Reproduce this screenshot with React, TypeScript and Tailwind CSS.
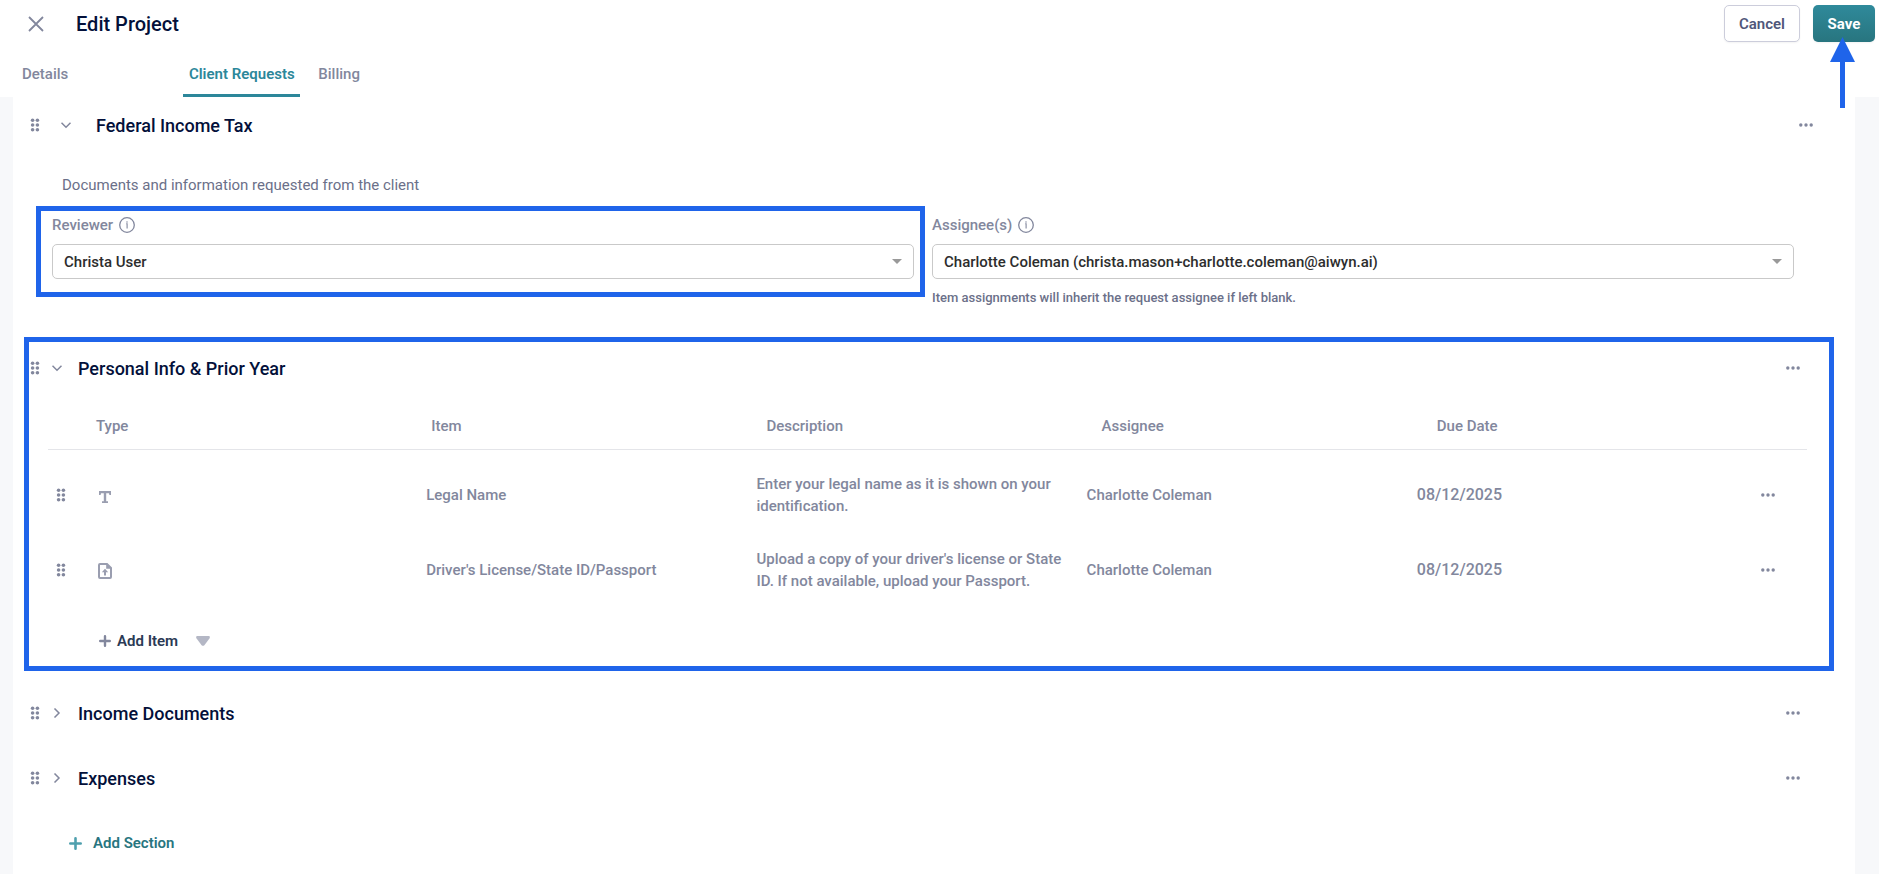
import { useState } from 'react';
import type { ReactNode } from 'react';

type RequestItem = {
  id: string;
  type: 'text' | 'file';
  name: string;
  description: string;
  assignee: string;
  dueDate: string;
};

const items: RequestItem[] = [
  {
    id: 'legal-name',
    type: 'text',
    name: 'Legal Name',
    description: 'Enter your legal name as it is shown on your identification.',
    assignee: 'Charlotte Coleman',
    dueDate: '08/12/2025',
  },
  {
    id: 'license',
    type: 'file',
    name: "Driver's License/State ID/Passport",
    description: "Upload a copy of your driver's license or State ID. If not available, upload your Passport.",
    assignee: 'Charlotte Coleman',
    dueDate: '08/12/2025',
  },
];

const columns = ['Type', 'Item', 'Description', 'Assignee', 'Due Date'];

function DragHandle() {
  return (
    <button type="button" aria-label="Reorder" className="block cursor-grab text-[#82879d]">
      <svg className="block h-[14px] w-[10px]" viewBox="0 0 10 14" fill="currentColor">
        {[2.3, 7, 11.7].map((cy) => (
          <g key={cy}>
            <circle cx="2.6" cy={cy} r="1.8" />
            <circle cx="7.4" cy={cy} r="1.8" />
          </g>
        ))}
      </svg>
    </button>
  );
}

function MoreButton() {
  return (
    <button type="button" aria-label="More options" className="block text-[#82879d]">
      <svg className="block h-1 w-[14px]" viewBox="0 0 14 4" fill="currentColor">
        <circle cx="1.8" cy="2" r="1.7" />
        <circle cx="7" cy="2" r="1.7" />
        <circle cx="12.2" cy="2" r="1.7" />
      </svg>
    </button>
  );
}

function Chevron({ open }: { open: boolean }) {
  return (
    <svg className="block h-[10px] w-[10px]" viewBox="0 0 10 10" fill="none" stroke="currentColor" strokeWidth="1.5">
      <path d={open ? 'M0.5 2.8 5 7.3 9.5 2.8' : 'M2.5 0.5 7 5 2.5 9.5'} />
    </svg>
  );
}

function InfoIcon() {
  return (
    <svg className="h-4 w-4 text-[#82879d]" viewBox="0 0 16 16" fill="none" stroke="currentColor" strokeWidth="1.3">
      <circle cx="8" cy="8" r="7.3" />
      <path d="M7.2 6.8H8.1V11.4" strokeWidth="1.1" />
      <circle cx="8" cy="4.9" r="0.75" fill="currentColor" stroke="none" />
    </svg>
  );
}

function TypeIcon({ type }: { type: RequestItem['type'] }) {
  if (type === 'text') {
    return (
      <svg className="ml-[3px] mt-1 h-3 w-3 text-[#9a9eb0]" viewBox="0 0 12 12" fill="currentColor" role="img" aria-label="Text">
        <path d="M0 0H12V4H10.4L10 2.2H7.2V10.2H9V12H3V10.2H4.8V2.2H2L1.6 4H0Z" />
      </svg>
    );
  }
  return (
    <svg className="ml-[2px] mt-[2px] h-4 w-[14px] text-[#9a9eb0]" viewBox="0 0 14 16" role="img" aria-label="File upload">
      <path d="M2 1H9L13 5V14Q13 15 12 15H2Q1 15 1 14V2Q1 1 2 1Z" fill="none" stroke="currentColor" strokeWidth="2" />
      <path d="M8.2 0.5V5.8H13.5Z" fill="currentColor" />
      <path d="M7 5.8 10.2 9.2H8V12.4H6V9.2H3.8Z" fill="currentColor" />
    </svg>
  );
}

function PlusIcon({ className }: { className: string }) {
  return (
    <svg className={className} viewBox="0 0 12 12" stroke="currentColor" strokeWidth="2.4" strokeLinecap="round">
      <path d="M6 1.2V10.8M1.2 6H10.8" />
    </svg>
  );
}

function Section({ title, open, onToggle, children }: { title: string; open: boolean; onToggle: () => void; children?: ReactNode }) {
  return (
    <section>
      <div className="flex h-[65px] items-center pb-1 pl-[6px] pr-[34px]">
        <DragHandle />
        <button type="button" aria-label={`Toggle ${title}`} onClick={onToggle} className="ml-3 text-[#82879d]">
          <Chevron open={open} />
        </button>
        <h3 className="ml-4 flex-1 pt-[2px] text-[18px] font-medium leading-6 text-[#03103a]">{title}</h3>
        <MoreButton />
      </div>
      {open && children}
    </section>
  );
}

function SelectField({ id, label, value, helper }: { id: string; label: string; value: string; helper?: string }) {
  return (
    <div>
      <div className="flex h-5 items-center gap-[6px] text-[#82879d]">
        <label htmlFor={id} className="text-[15px] font-medium leading-5">{label}</label>
        <InfoIcon />
      </div>
      <div className="relative mt-[9px]">
        <select
          id={id}
          defaultValue={value}
          className="h-[35px] w-full appearance-none rounded-[5px] border border-[#c9c9c9] bg-white pl-[11px] pr-8 pt-[2px] text-[15px] font-medium text-[#2d2d2d]"
        >
          <option>{value}</option>
        </select>
        <svg className="pointer-events-none absolute right-3 top-[15px] h-[5px] w-[10px] text-[#999999]" viewBox="0 0 10 5" fill="currentColor">
          <path d="M0 0H10L5 5Z" />
        </svg>
      </div>
      {helper && <p className="mt-[9px] text-[13px] font-medium leading-5 text-[#6b7089]">{helper}</p>}
    </div>
  );
}

function ItemsTable() {
  return (
    <table className="ml-6 mr-[27px] block text-left text-[15px] text-[#82879d]">
      <thead className="block">
        <tr className="grid h-[48px] grid-cols-[48px_repeat(5,minmax(0,1fr))_35px] items-center border-b border-[#e4e5e9]">
          <td />
          {columns.map((column) => (
            <th key={column} scope="col" className="font-medium leading-5">{column}</th>
          ))}
          <td />
        </tr>
      </thead>
      <tbody className="block pt-[7px]">
        {items.map((item) => (
          <tr key={item.id} className="grid h-[75px] grid-cols-[48px_repeat(5,minmax(0,1fr))_60px] items-center font-medium leading-[22px]">
            <td className="pl-2"><DragHandle /></td>
            <td><TypeIcon type={item.type} /></td>
            <td>{item.name}</td>
            <td className="pr-4">{item.description}</td>
            <td>{item.assignee}</td>
            <td className="text-base">{item.dueDate}</td>
            <td className="pl-[14px]"><MoreButton /></td>
          </tr>
        ))}
      </tbody>
    </table>
  );
}

export default function App() {
  const [openSections, setOpenSections] = useState<Record<string, boolean>>({ personal: true });

  const toggle = (key: string) => {
    setOpenSections(prev => ({ ...prev, [key]: !prev[key] }));
  };

  return (
    <div className="flex min-h-screen flex-col bg-[#f7f8fa] font-['Roboto',sans-serif]">
      <header className="bg-white">
        <div className="flex items-center py-[5px] pl-7 pr-1">
          <button type="button" aria-label="Close" className="text-[#82879d]">
            <svg className="block h-4 w-4" viewBox="0 0 16 16" stroke="currentColor" strokeWidth="1.8">
              <path d="M1 1 15 15M15 1 1 15" />
            </svg>
          </button>
          <h1 className="ml-8 flex-1 text-xl font-medium leading-6 text-[#03103a]">Edit Project</h1>
          <button type="button" className="h-[37px] w-[76px] rounded-[5px] border border-[#cccddb] bg-white pt-px text-[15px] font-semibold text-[#50577a] shadow-xs">
            Cancel
          </button>
          <div className="relative ml-[13px]">
            <button type="button" className="block h-[37px] w-[62px] rounded-[5px] bg-linear-to-b from-[#2f8a9b] to-[#28757f] pt-px text-[15px] font-bold text-white shadow-xs">
              Save
            </button>
            <svg className="pointer-events-none absolute left-[17px] top-8 h-[71px] w-[25px]" viewBox="0 0 25 71" fill="#1f64ea">
              <path d="M12.5 0 25 25H15V71H10V25H0Z" />
            </svg>
          </div>
        </div>
        <nav className="flex h-[50px] pl-[18px] text-[15px] font-medium leading-5 text-[#82879d]">
          <a href="#details" className="px-1 pt-[17px]">Details</a>
          <a href="#client-requests" aria-current="page" className="ml-[111px] flex w-[117px] justify-center rounded-t-xs pt-[17px] font-semibold text-[#2c879a] shadow-[inset_0_-3px_0_#2c879a]">
            Client Requests
          </a>
          <a href="#billing" className="ml-[14px] px-1 pt-[17px]">Billing</a>
        </nav>
      </header>

      <main className="ml-[13px] mr-6 flex-1 bg-white pb-5">
        <div className="flex h-14 items-center pl-[17px] pr-[42px]">
          <DragHandle />
          <button type="button" aria-label="Toggle Federal Income Tax" className="ml-[21px] text-[#82879d]">
            <Chevron open />
          </button>
          <h2 className="ml-[25px] flex-1 pt-[2px] text-[18px] font-medium leading-6 text-[#03103a]">Federal Income Tax</h2>
          <MoreButton />
        </div>

        <p className="ml-[49px] mt-[22px] text-[15px] leading-5 text-[#6b7089]">
          Documents and information requested from the client
        </p>

        <div className="ml-[39px] mr-[61px] mt-5 grid grid-cols-2 gap-[18px]">
          <div className="relative">
            <SelectField id="reviewer" label="Reviewer" value="Christa User" />
            <div className="pointer-events-none absolute -left-4 -right-[11px] -top-[9px] bottom-[11px] border-[5px] border-[#1f64ea]" />
          </div>
          <SelectField
            id="assignees"
            label="Assignee(s)"
            value="Charlotte Coleman (christa.mason+charlotte.coleman@aiwyn.ai)"
            helper="Item assignments will inherit the request assignee if left blank."
          />
        </div>

        <div className="ml-[11px] mr-[21px] mt-[29px]">
          <div className="relative pb-5">
            <Section title="Personal Info & Prior Year" open={!!openSections.personal} onToggle={() => toggle('personal')}>
              <ItemsTable />
              <div className="mt-6 flex h-5 items-center pl-[75px]">
                <button type="button" className="flex items-center gap-[6px] text-[15px] font-semibold leading-5 text-[#2b3a55]">
                  <PlusIcon className="h-3 w-3 text-[#82879d]" />
                  Add Item
                </button>
                <button type="button" aria-label="Choose item type" className="ml-[18px] text-[#b4b7c5]">
                  <svg className="block h-[10px] w-[14px]" viewBox="0 0 14 10" fill="currentColor">
                    <path d="M0.8 0H13.2Q14 0.6 13.8 2L8.4 9.2Q7 10.4 5.6 9.2L0.2 2Q0 0.6 0.8 0Z" />
                  </svg>
                </button>
              </div>
            </Section>
            <div className="pointer-events-none absolute inset-0 border-[5px] border-[#1f64ea]" />
          </div>

          <div className="mt-[11px]">
            <Section title="Income Documents" open={!!openSections.income} onToggle={() => toggle('income')} />
            <Section title="Expenses" open={!!openSections.expenses} onToggle={() => toggle('expenses')} />
          </div>

          <button type="button" className="ml-[45px] mt-[21px] flex items-center gap-[11px] text-[15px] font-semibold leading-5 text-[#28757f]">
            <PlusIcon className="h-[13px] w-[13px] text-[#4fa0ae]" />
            Add Section
          </button>
        </div>
      </main>
    </div>
  );
}
